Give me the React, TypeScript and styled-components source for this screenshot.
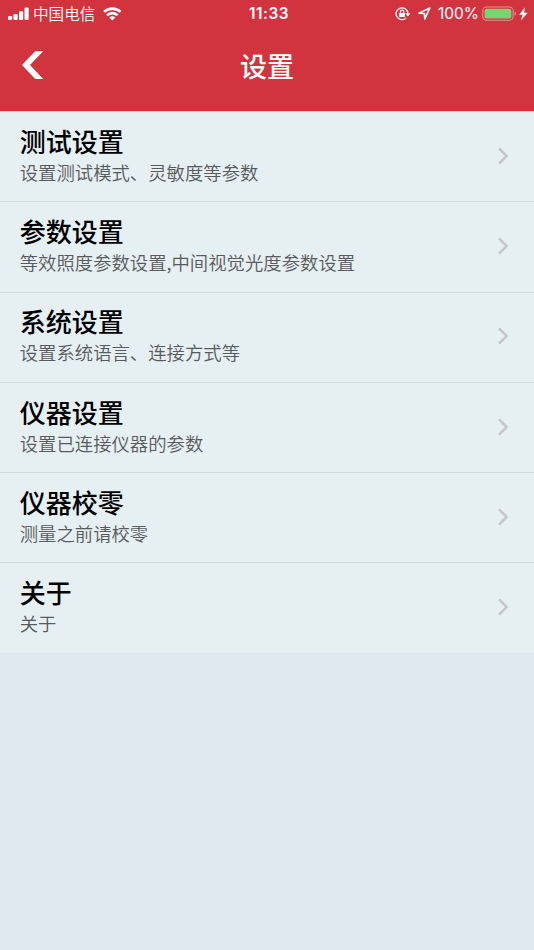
import React from "react";
import styled, { createGlobalStyle } from "styled-components";

const GlobalStyle = createGlobalStyle`
  * { box-sizing: border-box; }
  body {
    margin: 0;
    background: #e1e9f0;
    font-family: Inter, "Noto Sans CJK SC", sans-serif;
  }
`;

const Screen = styled.div`
  display: flex;
  flex-direction: column;
  height: 950px;
  overflow: hidden;
  background: #e1e9f0;
`;

const Header = styled.header`
  flex: none;
  height: 111px;
  background: #d1343f;
  color: #fff;
`;

const StatusBar = styled.div`
  display: grid;
  grid-template-columns: 1fr auto 1fr;
  align-items: center;
  height: 27px;
  padding: 0 6px 0 8px;
`;

const StatusGroup = styled.div<{ $end?: boolean }>`
  display: flex;
  align-items: center;
  justify-content: ${(p) => (p.$end ? "flex-end" : "flex-start")};
`;

const Carrier = styled.span`
  margin: 0 8px 0 4px;
  font-family: "Noto Sans CJK SC", sans-serif;
  font-size: 15.6px;
  line-height: 27px;
  font-weight: 350;
`;

const Clock = styled.span`
  padding-left: 2px;
  font-size: 15.3px;
  font-weight: 600;
  letter-spacing: 0.5px;
  line-height: 27px;
`;

const Percent = styled.span`
  margin: 0 4px 0 7px;
  font-size: 15.5px;
  line-height: 27px;
`;

const NavBar = styled.nav`
  display: grid;
  grid-template-columns: 60px 1fr 60px;
  align-items: center;
  height: 77px;
`;

const BackButton = styled.button`
  display: flex;
  padding: 0 0 0 21px;
  border: 0;
  background: none;
  color: inherit;
`;

const NavTitle = styled.h1`
  margin: 0;
  text-align: center;
  font-family: "Noto Sans CJK SC", sans-serif;
  font-size: 27px;
  line-height: 40px;
  font-weight: 500;
`;

const List = styled.ul`
  flex: none;
  margin: 0;
  padding: 0;
  border-top: 1px solid #d8d9dc;
  list-style: none;
`;

const Row = styled.li`
  display: flex;
  align-items: center;
  justify-content: space-between;
  height: 90.3px;
  padding: 0 25.5px 2px 19.7px;
  border-bottom: 1px solid #d2dade;
  background: #e6eff2;

  &:last-child { border-bottom-color: #dfe7eb; }
`;

const RowText = styled.div`
  padding-bottom: 2px;
`;

const RowTitle = styled.div`
  font-family: "Noto Sans CJK SC", sans-serif;
  font-size: 26px;
  line-height: 34px;
  font-weight: 500;
  color: #000;
`;

const RowDetail = styled.div`
  font-family: "Noto Sans CJK SC", sans-serif;
  font-size: 18.38px;
  line-height: 28px;
  font-weight: 350;
  color: #585a5b;
`;

const SETTINGS = [
  { title: "测试设置", detail: "设置测试模式、灵敏度等参数" },
  { title: "参数设置", detail: "等效照度参数设置,中间视觉光度参数设置" },
  { title: "系统设置", detail: "设置系统语言、连接方式等" },
  { title: "仪器设置", detail: "设置已连接仪器的参数" },
  { title: "仪器校零", detail: "测量之前请校零" },
  { title: "关于", detail: "关于" },
];

const SignalIcon = () => (
  <svg width="21" height="14" viewBox="0 0 21 14" fill="#fff">
    <rect x="0" y="9" width="4.2" height="4" rx="1.2" />
    <rect x="5.5" y="7" width="4.2" height="6" rx="1.2" />
    <rect x="11" y="4.3" width="4.2" height="8.7" rx="1.2" />
    <rect x="16.5" y="0.5" width="4.2" height="12.5" rx="1.2" />
  </svg>
);

const WifiIcon = () => (
  <svg width="19" height="14" viewBox="0 0 19 14" fill="none" stroke="#fff" strokeWidth="2.6">
    <path d="M1.1 4.9A11.8 11.8 0 0 1 17.5 4.9" />
    <path d="M4.1 8.3A7.4 7.4 0 0 1 14.5 8.3" />
    <path d="M9.3 13.6L6.3 10.6A4.3 4.3 0 0 1 12.3 10.6Z" fill="#fff" stroke="none" />
  </svg>
);

const RotationLockIcon = () => (
  <svg width="16" height="14" viewBox="0 0 16 14" fill="none" stroke="#fff" strokeWidth="1.3">
    <path d="M11.2 10.9A5.9 5.9 0 1 1 12.9 6.6" />
    <path d="M10.3 6.2H15.5L12.9 9.4Z" fill="#fff" stroke="none" />
    <rect x="4.2" y="5.9" width="5.8" height="4.2" rx="0.6" fill="#fff" stroke="none" />
    <path d="M5.4 6.2V4.8A1.7 1.7 0 0 1 8.8 4.8V6.2" strokeWidth="1.1" />
  </svg>
);

const LocationIcon = () => (
  <svg width="13" height="13" viewBox="0 0 13 13" fill="none" stroke="#fff" strokeWidth="1.6" strokeLinejoin="round">
    <path d="M11.8 1L1 6.1L6.4 6.5L6.8 11.9Z" />
  </svg>
);

const BatteryIcon = () => (
  <svg width="34" height="16" viewBox="0 0 34 16" overflow="visible">
    <rect x="-0.2" y="1" width="30.3" height="13.2" rx="3.8" fill="none" stroke="#e88e95" strokeWidth="1.1" />
    <rect x="1.6" y="2.7" width="26.8" height="9.8" rx="2" fill="#76d672" />
    <path d="M31.5 5.5Q33.1 6.1 33.1 7.6Q33.1 9.1 31.5 9.7Z" fill="#e88e95" />
  </svg>
);

const BoltIcon = () => (
  <svg width="9" height="14" viewBox="0 0 9 14" fill="#fff">
    <path d="M6.1 0.3L0.2 7.8H3.6L2 13.5L8.6 5.7H5Z" />
  </svg>
);

const LocationSlot = styled.span`
  display: flex;
  margin-left: 7px;
`;

const BoltSlot = styled.span`
  display: flex;
  margin-left: 2px;
`;

const BackIcon = () => (
  <svg width="23" height="29" viewBox="0 0 23 29" fill="currentColor">
    <path d="M14.2 0.3H22.2L9 14.1L22.2 27.9H14.2L1 14.1Z" />
  </svg>
);

const Chevron = () => (
  <svg width="12" height="18" viewBox="0 0 12 18" fill="none" stroke="#c3c5c9" strokeWidth="2.4">
    <path d="M2 1.4L9.6 9L2 16.6" />
  </svg>
);

export default function App() {
  return (
    <Screen>
      <GlobalStyle />
      <Header>
        <StatusBar>
          <StatusGroup>
            <SignalIcon />
            <Carrier>中国电信</Carrier>
            <WifiIcon />
          </StatusGroup>
          <Clock>11:33</Clock>
          <StatusGroup $end>
            <RotationLockIcon />
            <LocationSlot><LocationIcon /></LocationSlot>
            <Percent>100%</Percent>
            <BatteryIcon />
            <BoltSlot><BoltIcon /></BoltSlot>
          </StatusGroup>
        </StatusBar>
        <NavBar>
          <BackButton aria-label="返回"><BackIcon /></BackButton>
          <NavTitle>设置</NavTitle>
        </NavBar>
      </Header>
      <List>
        {SETTINGS.map((item) => (
          <Row key={item.title}>
            <RowText>
              <RowTitle>{item.title}</RowTitle>
              <RowDetail>{item.detail}</RowDetail>
            </RowText>
            <Chevron />
          </Row>
        ))}
      </List>
    </Screen>
  );
}
